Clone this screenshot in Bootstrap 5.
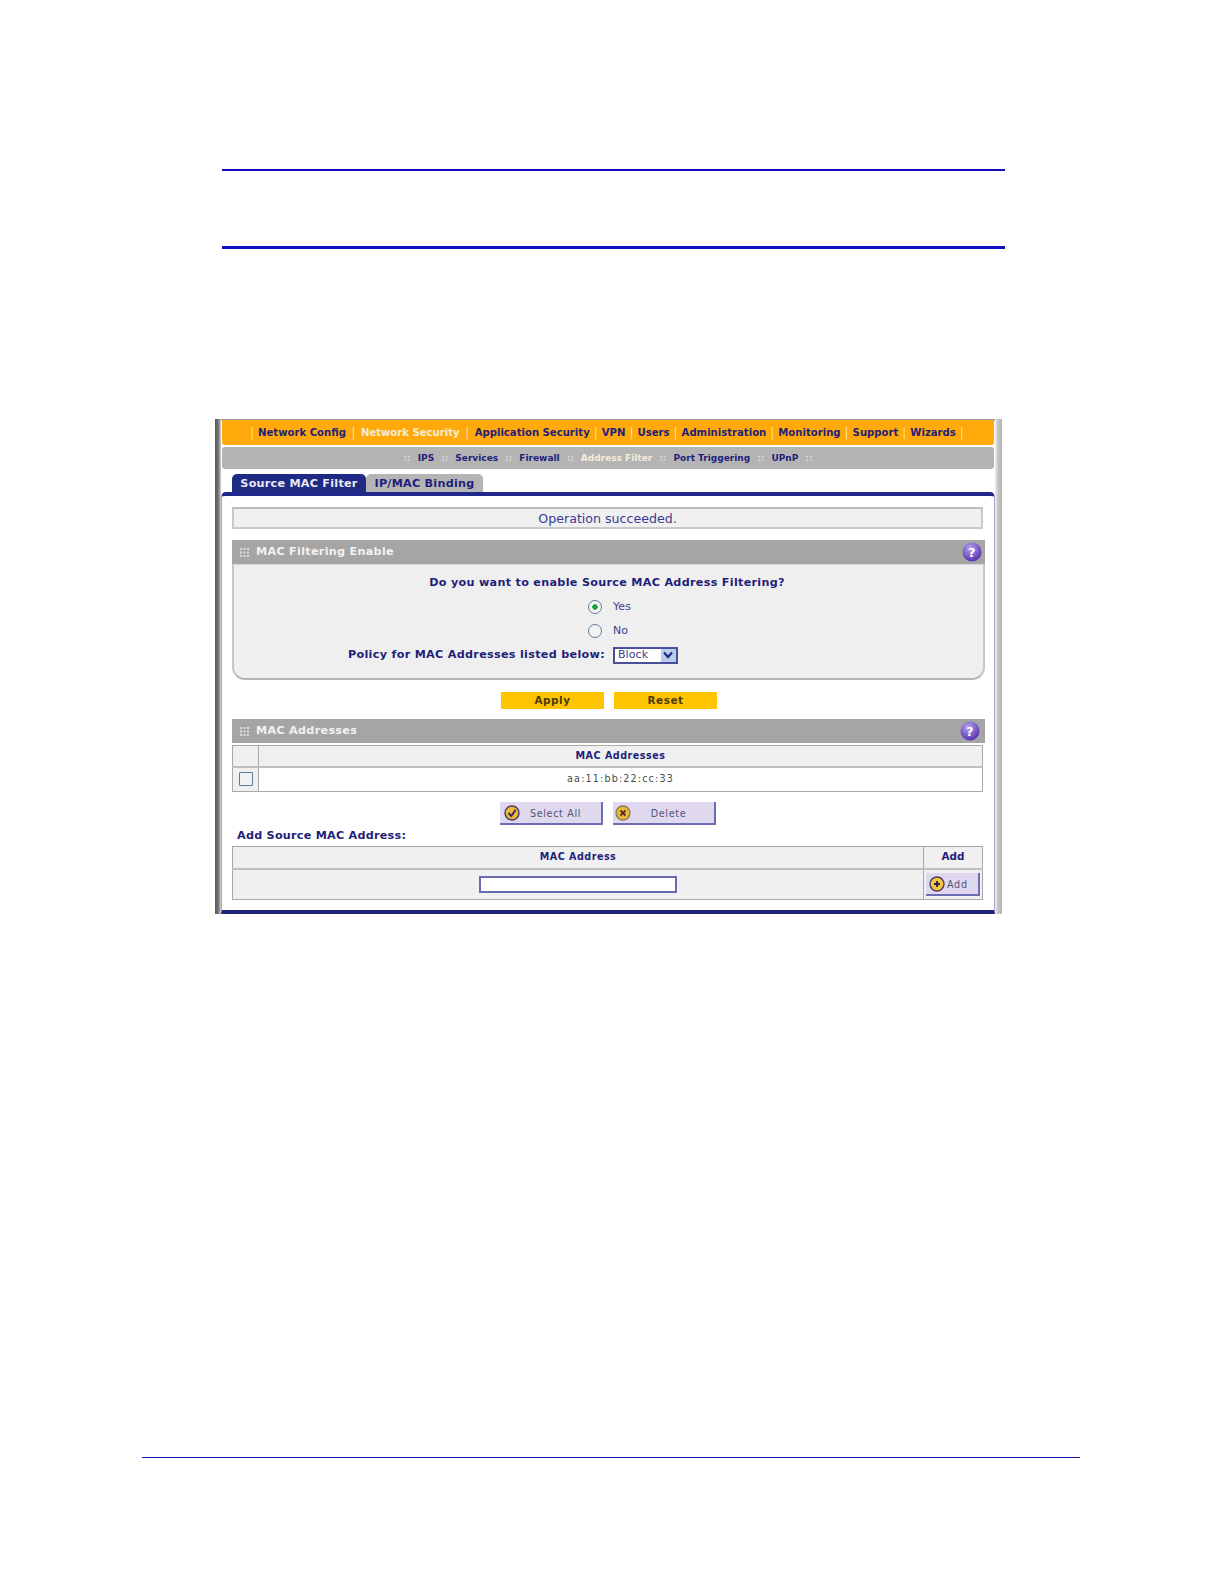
<!DOCTYPE html>
<html lang="en">
<head>
<meta charset="utf-8">
<title>Source MAC Filter</title>
<link href="https://cdn.jsdelivr.net/npm/bootstrap@5.3.0/dist/css/bootstrap.min.css" rel="stylesheet">
<style>
html,body{background:#fff;margin:0}
.sheet{width:1224px;height:1584px;position:relative;padding-top:169px;font-family:"DejaVu Sans","Liberation Sans",sans-serif;color:#1f1f7a;overflow:hidden}
.rule-a,.rule-b{margin-left:222px;width:783px;background:#0f0fbe}
.rule-a{height:2px}
.rule-b{height:3px;margin-top:75px}
.ui-win{margin:170px 0 0 215px;width:787px;height:495px;padding:1px 7px 0 6px;
 background:linear-gradient(90deg,#5a5a5a 0,#6e6e6e 3px,#a8a8a8 5px,#e0e0e0 6px) left top/6px 100% no-repeat,linear-gradient(90deg,#f2f2f2 0,#c4c4c4 3px,#b4b4b4 7px) right top/7px 100% no-repeat,linear-gradient(#8a8a8a,#d8d8d8) left top/100% 2px no-repeat}
.top-bar{margin:0 1px;height:25px;padding:1px 0 0 24px;background:#ffa90a;border-radius:0 0 3px 3px;font-size:10.1px;font-weight:700;color:#1f1f7a;white-space:nowrap}
.top-bar span{flex:none}
.top-bar .sep{color:#ffe2a0;font-weight:400;font-size:12px;margin:0 4px}
.top-bar .sep.wide{margin:0 5.5px}
.top-bar .act,.sub-bar .act{color:#f4ecd8}
.sub-bar{margin:2px 1px 0;height:22px;padding-top:1px;background:#b4b4b4;border-radius:3px;font-size:9px;font-weight:700;white-space:nowrap}
.sub-bar .sep{color:#d8d8d8;margin:0 7px}
.tab-row{margin:5px 0 0 11px;height:18px;gap:0}
.tab-on,.tab-off{height:19px;font-size:11.2px;font-weight:700;line-height:20px;border-radius:5px 5px 0 0;letter-spacing:.25px;text-align:center;position:relative}
.tab-on{width:134px;background:#1f2a84;color:#e9e9f2}
.tab-off{width:117px;background:#b5b5b5;color:#1f1f7a}
.body-panel{height:422px;border:2px solid #a4a4d8;border-width:0 1px 4px 1px;border-bottom-color:#20246e;border-top:4px solid #20288a;border-radius:5px 5px 0 0;padding:11px 9px 0 10px;position:relative;background:#fff;width:774px}
.msg-box{height:22px;background:#f0f0f0;border:2px solid #c9c9c9;border-top-color:#bcbcbc;margin-right:2px;font-size:12.6px;line-height:20px;text-align:center;color:#3a3a92}
.sec-head{height:24px;background:#a5a5a5;padding:0 3px 0 8px;color:#f2f2f2;font-size:11.2px;font-weight:700;letter-spacing:.3px;gap:7px}
.sec-first{margin-top:11px}
.enable-box{height:116px;background:#efefef;border:2px solid #c6c6c6;border-top:1px solid #d8d8d8;border-bottom-color:#b4b4b4;border-radius:0 0 13px 13px;font-size:11.2px;font-weight:700;letter-spacing:.3px;text-align:center;padding-top:10px;color:#1f1f7a}
.ask{height:16px;line-height:16px;margin-bottom:4px;padding-right:3px}
.opt-row{height:24px;padding-left:354px;gap:11px;font-size:11px;font-weight:400;letter-spacing:.1px;color:#3d3d8a}
.opt-row input.form-check-input{width:14px;height:14px;margin:0;background-color:#f4f4f4;border:1.5px solid #5c7a96;flex:none}
.opt-row input.form-check-input:checked{background-color:#f4f4f4;border-color:#5c7a96;background-image:radial-gradient(circle,#1fa43c 0 2.5px,transparent 3px)}
.pol-row{height:24px;padding-left:114px;gap:8px}
.pick{width:65px;height:17px;border:2px solid #4a4f9c;border-radius:0;background:#fff;font-size:11px;font-weight:400;letter-spacing:.1px;color:#3d3d8a;padding:0 0 0 3px}
.pick-arrow{width:15px;height:13px;background:#b9cdea;flex:none}
.act-row{gap:10px;margin:12px 0 10px 269px}
.btn.btn-gold{width:103px;height:17px;padding:0;border:0;border-radius:0;background:#ffc400;color:#4a3a10;font-size:10.4px;font-weight:700;letter-spacing:.55px;line-height:17px}
.thin-gap{height:2px}
.help-two{margin-right:2px}
table.grid-tb{margin:0;border-collapse:collapse;width:751px;table-layout:fixed;font-size:9.6px;text-align:center}
table.grid-tb th,table.grid-tb td{padding:0;border:1px solid #a8a8a8;vertical-align:middle;color:#1f1f7a;background:#f0f0f0;box-shadow:none}
table.grid-tb th{font-weight:700;border-bottom:2px solid #c0c0c0;letter-spacing:.5px}
table.grid-tb td{border-top:0}
.tb-one th{height:21px}
.tb-one td{height:25px;background:#fff!important;color:#4a4a4a!important;letter-spacing:1.15px}
.tb-one td.ck{background:#f0f0f0!important}
.tb-one input.form-check-input{width:14px;height:14px;margin:0;border:1.5px solid #5c7a96;border-radius:1px;background-color:#f2f2f2;display:block;margin-left:6px}
.lil-row{gap:10px;margin:10px 0 0 268px}
.btn.btn-lav{width:103px;height:23px;padding:1px 0 0 10px;border:0;border-right:2px solid #6d6db5;border-bottom:2px solid #6d6db5;border-radius:0;background:#e0d8ee;color:#54547a;font-size:9.6px;letter-spacing:.65px;position:relative;line-height:21px}
.btn.btn-lav svg{position:absolute;left:4px;top:3px}
.btn.btn-lav.del svg{left:2px;top:3px}
.add-label{margin:0 0 0 5px;height:21px;font-size:11.2px;font-weight:700;letter-spacing:.25px;line-height:21px;color:#1f1f7a}
.tb-two th{height:22px;font-size:9.6px}
.tb-two th.adh{font-size:10.4px;letter-spacing:.1px}
.tb-two td{height:31px;border-bottom:2px solid #b8b8b8}
.mac-in{display:block;width:198px;height:17px;margin:0 auto;padding:0;border:2px solid #6a6ab0;border-radius:0;background:#fff}
.btn.btn-lav.add{width:54px;height:23px;margin:0 0 0 2px;display:block;font-size:9.6px;text-align:left;padding-left:21px;letter-spacing:.7px}
.btn.btn-lav.add svg{left:3px;top:3px}
.foot-rule{position:absolute;left:142px;top:1457px;width:938px;height:1px;background:#1818a8}
</style>
</head>
<body>
<div class="sheet">
  <div class="rule-a"></div>
  <div class="rule-b"></div>

  <div class="ui-win">
    <div class="top-bar d-flex align-items-center">
      <span class="sep">|</span><span>Network Config</span>
      <span class="sep wide">|</span><span class="act">Network Security</span>
      <span class="sep wide">|</span><span>Application Security</span>
      <span class="sep">|</span><span>VPN</span>
      <span class="sep">|</span><span>Users</span>
      <span class="sep">|</span><span>Administration</span>
      <span class="sep">|</span><span>Monitoring</span>
      <span class="sep">|</span><span>Support</span>
      <span class="sep">|</span><span>Wizards</span>
      <span class="sep">|</span>
    </div>
    <div class="sub-bar d-flex align-items-center justify-content-center">
      <span class="sep">::</span><span>IPS</span>
      <span class="sep">::</span><span>Services</span>
      <span class="sep">::</span><span>Firewall</span>
      <span class="sep">::</span><span class="act">Address Filter</span>
      <span class="sep">::</span><span>Port Triggering</span>
      <span class="sep">::</span><span>UPnP</span>
      <span class="sep">::</span>
    </div>
    <div class="tab-row d-flex">
      <div class="tab-on">Source MAC Filter</div>
      <div class="tab-off">IP/MAC Binding</div>
    </div>
    <div class="body-panel">
      <div class="msg-box">Operation succeeded.</div>

      <div class="sec-head sec-first d-flex align-items-center">
        <svg width="9" height="9" viewBox="0 0 9 9" aria-hidden="true"><g fill="#dcdcdc"><rect x="0" y="0" width="2" height="2"/><rect x="3.5" y="0" width="2" height="2"/><rect x="7" y="0" width="2" height="2"/><rect x="0" y="3.5" width="2" height="2"/><rect x="3.5" y="3.5" width="2" height="2"/><rect x="7" y="3.5" width="2" height="2"/><rect x="0" y="7" width="2" height="2"/><rect x="3.5" y="7" width="2" height="2"/><rect x="7" y="7" width="2" height="2"/></g></svg>
        <span class="flex-grow-1">MAC Filtering Enable</span>
        <svg width="20" height="20" viewBox="0 0 20 20" aria-hidden="true"><defs><radialGradient id="hq" cx=".4" cy=".3" r=".8"><stop offset="0" stop-color="#b9a3f2"/><stop offset="1" stop-color="#4a22a8"/></radialGradient></defs><circle cx="10" cy="10" r="9.5" fill="url(#hq)"/><text x="10" y="14.5" font-size="13" font-weight="700" text-anchor="middle" fill="#fff" font-family="DejaVu Sans">?</text></svg>
      </div>
      <div class="enable-box">
        <div class="ask">Do you want to enable Source MAC Address Filtering?</div>
        <div class="opt-row d-flex align-items-center">
          <input class="form-check-input" type="radio" name="en" checked><span>Yes</span>
        </div>
        <div class="opt-row d-flex align-items-center">
          <input class="form-check-input" type="radio" name="en"><span>No</span>
        </div>
        <div class="pol-row d-flex align-items-center">
          <span>Policy for MAC Addresses listed below:</span>
          <div class="pick d-flex align-items-center justify-content-between">
            <span>Block</span>
            <span class="pick-arrow d-flex align-items-center justify-content-center"><svg width="10" height="8" viewBox="0 0 10 8" aria-hidden="true"><path d="M1 1.5 5 6 9 1.5" fill="none" stroke="#1f2a84" stroke-width="2.2"/></svg></span>
          </div>
        </div>
      </div>

      <div class="act-row d-flex">
        <button type="button" class="btn btn-gold">Apply</button>
        <button type="button" class="btn btn-gold">Reset</button>
      </div>

      <div class="sec-head d-flex align-items-center">
        <svg width="9" height="9" viewBox="0 0 9 9" aria-hidden="true"><g fill="#dcdcdc"><rect x="0" y="0" width="2" height="2"/><rect x="3.5" y="0" width="2" height="2"/><rect x="7" y="0" width="2" height="2"/><rect x="0" y="3.5" width="2" height="2"/><rect x="3.5" y="3.5" width="2" height="2"/><rect x="7" y="3.5" width="2" height="2"/><rect x="0" y="7" width="2" height="2"/><rect x="3.5" y="7" width="2" height="2"/><rect x="7" y="7" width="2" height="2"/></g></svg>
        <span class="flex-grow-1">MAC Addresses</span>
        <svg class="help-two" width="20" height="20" viewBox="0 0 20 20" aria-hidden="true"><circle cx="10" cy="10" r="9.5" fill="url(#hq)"/><text x="10" y="14.5" font-size="13" font-weight="700" text-anchor="middle" fill="#fff" font-family="DejaVu Sans">?</text></svg>
      </div>
      <div class="thin-gap"></div>
      <table class="table grid-tb tb-one">
        <colgroup><col style="width:26px"><col></colgroup>
        <tr><th></th><th>MAC Addresses</th></tr>
        <tr><td class="ck"><input class="form-check-input" type="checkbox" aria-label="Select"></td><td>aa:11:bb:22:cc:33</td></tr>
      </table>

      <div class="lil-row d-flex">
        <button type="button" class="btn btn-lav"><svg width="16" height="16" viewBox="0 0 16 16" aria-hidden="true"><circle cx="8" cy="8" r="7" fill="#e9b93a" stroke="#4a3a6a" stroke-width="1.4"/><path d="M4.5 8 7.3 11 11.5 5" fill="none" stroke="#3d2a5a" stroke-width="2"/></svg>Select All</button>
        <button type="button" class="btn btn-lav del"><svg width="16" height="16" viewBox="0 0 16 16" aria-hidden="true"><circle cx="8" cy="8" r="7" fill="#e9b93a" stroke="#8a7a50" stroke-width="1.4"/><path d="M5.5 5.5 10.5 10.5M10.5 5.5 5.5 10.5" fill="none" stroke="#5a2a2a" stroke-width="1.8"/></svg>Delete</button>
      </div>
      <div class="add-label">Add Source MAC Address:</div>
      <table class="table grid-tb tb-two">
        <colgroup><col><col style="width:59px"></colgroup>
        <tr><th>MAC Address</th><th class="adh">Add</th></tr>
        <tr>
          <td><input class="mac-in" type="text" aria-label="MAC Address"></td>
          <td><button type="button" class="btn btn-lav add"><svg width="16" height="16" viewBox="0 0 16 16" aria-hidden="true"><circle cx="8" cy="8" r="7" fill="#f0c83a" stroke="#4a3a6a" stroke-width="1.4"/><path d="M8 5v6M5 8h6" fill="none" stroke="#3d1a5a" stroke-width="2"/></svg>Add</button></td>
        </tr>
      </table>
    </div>
  </div>

  <div class="foot-rule"></div>
</div>
<script src="https://cdn.jsdelivr.net/npm/bootstrap@5.3.0/dist/js/bootstrap.bundle.min.js"></script>
</body>
</html>
